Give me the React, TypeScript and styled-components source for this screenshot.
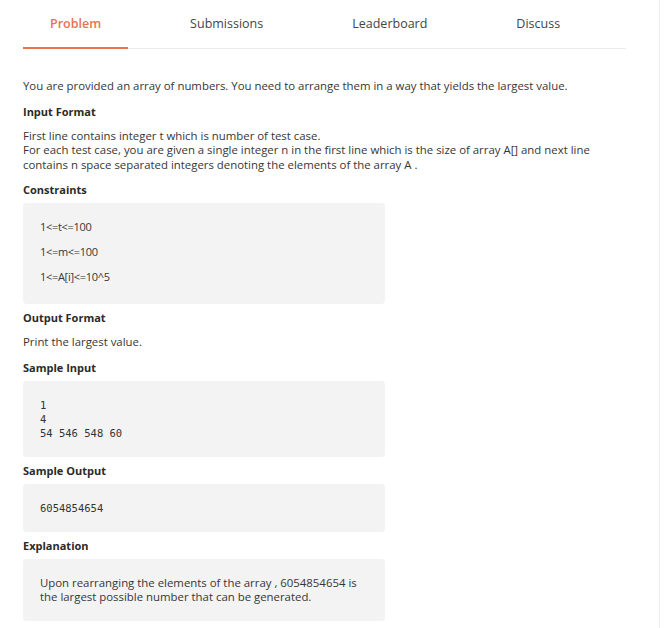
import styled, { createGlobalStyle } from "styled-components";

const GlobalStyle = createGlobalStyle`
  body {
    margin: 0;
    background: #ffffff;
    font-family: "Open Sans", Lato, sans-serif;
  }
`

const Page = styled.div`
  width: 660px;
  min-height: 628px;
  border-right: 1px solid #ececec;
  box-sizing: border-box;
  padding: 0 0 0 23px;
`

const Tabs = styled.div`
  display: flex;
  gap: 35px;
  width: 603px;
  border-bottom: 1px solid #ececec;
`

const Tab = styled.div<{ $active?: boolean }>`
  height: 47px;
  padding: 0 27px;
  display: flex;
  align-items: center;
  margin-bottom: -1px;
  font-size: 12.5px;
  font-weight: ${p => (p.$active ? 600 : 400)};
  color: ${p => (p.$active ? "#e8734f" : "#444444")};
  border-bottom: 2px solid ${p => (p.$active ? "#e8734f" : "transparent")};
`

const Content = styled.div`
  padding-top: 30px;
  width: 620px;
`

const Text = styled.p`
  margin: 0 0 10px;
  font-size: 11.4px;
  line-height: 14.5px;
  color: #363636;
  white-space: nowrap;
`

const Heading = styled.h4<{ $tight?: boolean }>`
  margin: 0 0 ${p => (p.$tight ? "6px" : "10px")};
  font-size: 11px;
  line-height: 15px;
  font-weight: 700;
  color: #2a2a2a;
`

const Box = styled.div`
  width: 362px;
  box-sizing: border-box;
  background: #f3f3f3;
  border-radius: 4px;
  padding: 17px;
  margin-bottom: 6px;
`

const ConstraintBox = styled(Box)`
  padding: 16px 17px 20px;
  display: flex;
  flex-direction: column;
  gap: 10px;
`

const ExplanationBox = styled(Box)`
  padding-bottom: 16px;
`

const Constraint = styled.div`
  font-size: 11px;
  line-height: 15px;
  letter-spacing: -0.3px;
  color: #363636;
`

const Code = styled.pre`
  margin: 0;
  font-family: "DejaVu Sans Mono", "Liberation Mono", monospace;
  font-size: 10.5px;
  line-height: 14px;
  color: #333333;
`

const BoxText = styled.p`
  margin: 0;
  font-size: 11.4px;
  line-height: 14.5px;
  color: #363636;
`

const tabs = ["Problem", "Submissions", "Leaderboard", "Discuss"]

const App = () => {
  return (
    <>
      <GlobalStyle />
      <Page>
        <Tabs>
          {tabs.map((t, i) => (
            <Tab key={t} $active={i === 0}>{t}</Tab>
          ))}
        </Tabs>
        <Content>
          <Text>You are provided an array of numbers. You need to arrange them in a way that yields the largest value.</Text>
          <Heading>Input Format</Heading>
          <Text>
            First line contains integer t which is number of test case.<br />
            For each test case, you are given a single integer n in the first line which is the size of array A[] and next line<br />
            contains n space separated integers denoting the elements of the array A .
          </Text>
          <Heading $tight>Constraints</Heading>
          <ConstraintBox>
            <Constraint>1&lt;=t&lt;=100</Constraint>
            <Constraint>1&lt;=m&lt;=100</Constraint>
            <Constraint>1&lt;=A[i]&lt;=10^5</Constraint>
          </ConstraintBox>
          <Heading>Output Format</Heading>
          <Text>Print the largest value.</Text>
          <Heading $tight>Sample Input</Heading>
          <Box>
            <Code>{"1\n4\n54 546 548 60"}</Code>
          </Box>
          <Heading $tight>Sample Output</Heading>
          <Box>
            <Code>6054854654</Code>
          </Box>
          <Heading $tight>Explanation</Heading>
          <ExplanationBox>
            <BoxText>
              Upon rearranging the elements of the array , 6054854654 is<br />
              the largest possible number that can be generated.
            </BoxText>
          </ExplanationBox>
        </Content>
      </Page>
    </>
  )
}

export default App;
